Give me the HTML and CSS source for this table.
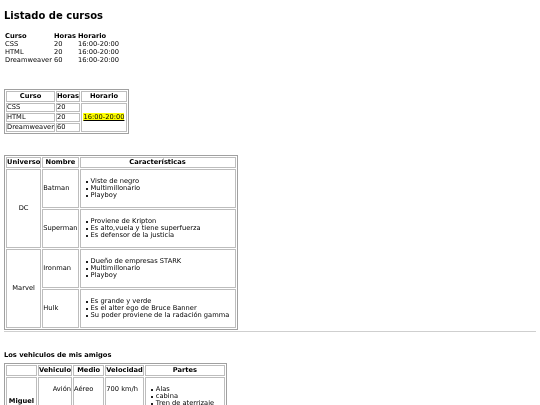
FILE: index.html
```html
<!DOCTYPE html>
<html lang="es">
<head>
<meta charset="utf-8">
<title>Listado de cursos</title>
<link rel="stylesheet" href="styles.css">
</head>
<body>
<h1 class="title">Listado de cursos</h1>

<table class="plain">
  <tr><th>Curso</th><th>Horas</th><th>Horario</th></tr>
  <tr><td>CSS</td><td>20</td><td>16:00-20:00</td></tr>
  <tr><td>HTML</td><td>20</td><td>16:00-20:00</td></tr>
  <tr><td>Dreamweaver</td><td>60</td><td>16:00-20:00</td></tr>
</table>

<table class="grid courses">
  <tr><th>Curso</th><th>Horas</th><th class="c-hor">Horario</th></tr>
  <tr><td>CSS</td><td>20</td><td rowspan="3" class="mid"><mark class="hl">16:00-20:00</mark></td></tr>
  <tr><td>HTML</td><td>20</td></tr>
  <tr><td>Dreamweaver</td><td>60</td></tr>
</table>

<table class="grid heroes">
  <tr><th>Universo</th><th>Nombre</th><th class="c-car">Características</th></tr>
  <tr>
    <td rowspan="2" class="mid">DC</td>
    <td>Batman</td>
    <td><ul class="feat"><li>Viste de negro</li><li>Multimillonario</li><li>Playboy</li></ul></td>
  </tr>
  <tr>
    <td>Superman</td>
    <td><ul class="feat"><li>Proviene de Kripton</li><li>Es alto,vuela y tiene superfuerza</li><li>Es defensor de la justicia</li></ul></td>
  </tr>
  <tr>
    <td rowspan="2" class="mid">Marvel</td>
    <td>Ironman</td>
    <td><ul class="feat"><li>Dueño de empresas STARK</li><li>Multimillonario</li><li>Playboy</li></ul></td>
  </tr>
  <tr>
    <td>Hulk</td>
    <td><ul class="feat"><li>Es grande y verde</li><li>Es el alter ego de Bruce Banner</li><li>Su poder proviene de la radación gamma</li></ul></td>
  </tr>
</table>

<hr class="rule">

<h3 class="subtitle">Los vehiculos de mis amigos</h3>

<table class="grid cars">
  <tr><th class="c-name"></th><th class="c-veh">Vehiculo</th><th class="c-med">Medio</th><th class="c-vel">Velocidad</th><th class="c-part">Partes</th></tr>
  <tr class="base">
    <th rowspan="2" class="owner">Miguel</th>
    <td class="right">Avión</td>
    <td>Aéreo</td>
    <td>700 km/h</td>
    <td><ul class="feat"><li>Alas</li><li>cabina</li><li>Tren de aterrizaje</li></ul></td>
  </tr>
  <tr>
    <td class="right">Coche</td>
    <td>Terrestre</td>
    <td>200 km/h</td>
    <td>Ruedas</td>
  </tr>
</table>
</body>
</html>
```

FILE: styles.css
```css
html { background: #fff; }
body {
  margin: 4px;
  font-family: "DejaVu Sans", Verdana, sans-serif;
  font-size: 6.7px;
  color: #000;
  will-change: transform;
}
.title {
  font-size: 10px;
  font-weight: bold;
  margin: 6px 0 11px;
}
table { border-collapse: separate; }
th, td { line-height: 7px; vertical-align: middle; }

.plain { border-spacing: 1px; margin-bottom: 24px; }
.plain th { text-align: left; padding: 0 1px 0 0; }
.plain td { padding: 0 1px 0 0; }

.grid {
  border: 1px solid #a0a0a0;
  border-spacing: 1px;
}
.grid th, .grid td {
  border: 1px solid #bdbdbd;
  padding: 0;
}
.grid th { text-align: center; padding-top: 1px; padding-bottom: 1px; }
.courses { margin-bottom: 21px; }
.c-hor { width: 44px; }
.c-car { width: 154px; }
.mid { text-align: center; }
.hl {
  background: #ffff00;
  color: #000;
  text-decoration: underline;
}
.feat {
  margin: 8px 0;
  padding-left: 5px;
  list-style: none;
}
.feat li { line-height: 7px; display: flex; align-items: center; gap: 3px; }
.feat li::before {
  content: "";
  width: 2px;
  height: 2px;
  background: #222;
  flex: none;
}
.rule {
  margin: 1px 0 0;
  border: 0;
  border-top: 1px solid #cfcfcf;
  height: 0;
}
.subtitle {
  font-size: 6.7px;
  font-weight: bold;
  margin: 19px 0 4px;
}
.right { text-align: right; }
.base > td { vertical-align: baseline; }
.c-name { width: 29px; }
.c-veh { width: 31px; }
.c-med { width: 27px; }
.c-vel { width: 33px; }
.c-part { width: 78px; }
.owner { text-align: left; vertical-align: middle; }
```
